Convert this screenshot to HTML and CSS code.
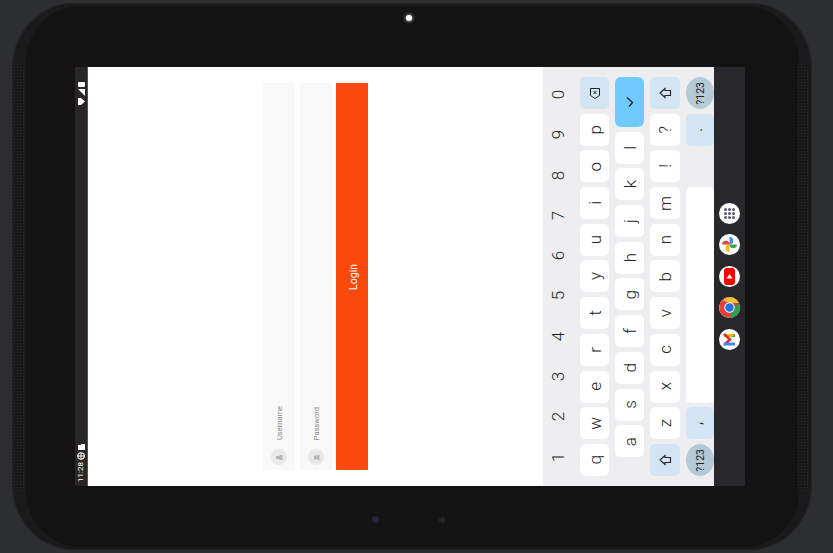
FILE: index.html
```html
<!DOCTYPE html>
<html lang="en">
<head>
<meta charset="utf-8">
<title>Login</title>
<link rel="stylesheet" href="styles.css">
</head>
<body>
<div class="device">
  <div class="face"></div>
  <div class="grille grille-left"></div>
  <div class="grille grille-right"></div>
  <div class="camera"></div>
  <div class="sensor sensor-a"></div>
  <div class="sensor sensor-b"></div>
  <main class="screen">
    <aside class="status">
      <div class="status-group">
        <svg class="st-icon" width="7" height="5" viewBox="0 0 7 5"><rect x="0" y="0" width="7" height="5" rx="1" fill="#fff"/></svg>
        <svg class="st-icon" width="7" height="7" viewBox="0 0 7 7"><path d="M0 0H7V7Z" fill="#fff"/></svg>
        <svg class="st-icon" width="7" height="7" viewBox="0 0 7 7"><path d="M0 0 3 0 7 3.5 3 7 0 7Z" fill="#fff"/></svg>
      </div>
      <div class="status-group">
        <svg class="st-icon" width="7" height="6" viewBox="0 0 7 6"><path d="M0 1H3V0H7V6H0Z" fill="#fff"/></svg>
        <svg class="st-icon" width="8" height="8" viewBox="0 0 8 8"><circle cx="4" cy="4" r="3.2" fill="none" stroke="#fff" stroke-width="1.1"/><path d="M0 4H8M4 1V7" stroke="#fff" stroke-width="1"/></svg>
        <span class="time">11:28</span>
      </div>
    </aside>

    <section class="app">
      <div class="field">
        <span class="field-label">Username</span>
        <span class="field-icon"><svg width="7" height="7" viewBox="0 0 7 7"><path d="M0 2H3.500V1H6.500V6H3.500V5H0Z" fill="#b5b5b5"/></svg></span>
      </div>
      <div class="field">
        <span class="field-label">Password</span>
        <span class="field-icon"><svg width="7" height="7" viewBox="0 0 7 7"><path d="M1 1.500H5V0.800H6.500V6.200H5V5.500H1Z" fill="#b5b5b5"/></svg></span>
      </div>
      <button class="login"><span class="rot login-text">Login</span></button>
    </section>

    <section class="keyboard">
      <div class="digits">
        <span class="rot">0</span><span class="rot">9</span><span class="rot">8</span><span class="rot">7</span><span class="rot">6</span><span class="rot">5</span><span class="rot">4</span><span class="rot">3</span><span class="rot">2</span><span class="rot">1</span>
      </div>
      <div class="kcol">
        <div class="key action"><svg width="12" height="13" viewBox="0 0 12 13"><path d="M1.500 1.500H10.500V8.500L6 11.500 1.500 8.500Z" fill="none" stroke="#222" stroke-width="1"/><path d="M4.500 4 7.500 7M7.500 4 4.500 7" stroke="#222" stroke-width="1"/></svg></div>
        <div class="key"><span class="rot">p</span></div>
        <div class="key"><span class="rot">o</span></div>
        <div class="key"><span class="rot">i</span></div>
        <div class="key"><span class="rot">u</span></div>
        <div class="key"><span class="rot">y</span></div>
        <div class="key"><span class="rot">t</span></div>
        <div class="key"><span class="rot">r</span></div>
        <div class="key"><span class="rot">e</span></div>
        <div class="key"><span class="rot">w</span></div>
        <div class="key"><span class="rot">q</span></div>
      </div>
      <div class="kcol">
        <div class="key enter"><svg width="10" height="12" viewBox="0 0 10 12"><path d="M2 1.500 7.500 6.500 4 10.500" fill="none" stroke="#222" stroke-width="1.300"/></svg></div>
        <div class="key"><span class="rot">l</span></div>
        <div class="key"><span class="rot">k</span></div>
        <div class="key"><span class="rot">j</span></div>
        <div class="key"><span class="rot">h</span></div>
        <div class="key"><span class="rot">g</span></div>
        <div class="key"><span class="rot">f</span></div>
        <div class="key"><span class="rot">d</span></div>
        <div class="key"><span class="rot">s</span></div>
        <div class="key"><span class="rot">a</span></div>
      </div>
      <div class="kcol">
        <div class="key action"><svg width="13" height="12" viewBox="0 0 13 12"><path d="M1 6 6 1.500V3.500H11.500V8.500H6V10.500Z" fill="none" stroke="#222" stroke-width="1.100"/></svg></div>
        <div class="key"><span class="rot">?</span></div>
        <div class="key"><span class="rot">!</span></div>
        <div class="key"><span class="rot">m</span></div>
        <div class="key"><span class="rot">n</span></div>
        <div class="key"><span class="rot">b</span></div>
        <div class="key"><span class="rot">v</span></div>
        <div class="key"><span class="rot">c</span></div>
        <div class="key"><span class="rot">x</span></div>
        <div class="key"><span class="rot">z</span></div>
        <div class="key action"><svg width="13" height="12" viewBox="0 0 13 12"><path d="M1 6 6 1.500V3.500H11.500V8.500H6V10.500Z" fill="none" stroke="#222" stroke-width="1.100"/></svg></div>
      </div>
      <div class="kcol kcol-edge">
        <div class="key round"><span class="rot small">?123</span></div>
        <div class="key action"><span class="rot punct">.</span></div>
        <div class="key ghost"></div>
        <div class="key space"></div>
        <div class="key action"><span class="rot punct">,</span></div>
        <div class="key round"><span class="rot small">?123</span></div>
      </div>
    </section>

    <nav class="dock">
      <span class="app-icon"><svg width="13" height="13" viewBox="0 0 13 13"><g fill="#5c5a78"><circle cx="2.500" cy="2.500" r="1.500"/><circle cx="6.500" cy="2.500" r="1.500"/><circle cx="10.500" cy="2.500" r="1.500"/><circle cx="2.500" cy="6.500" r="1.500"/><circle cx="6.500" cy="6.500" r="1.500"/><circle cx="10.500" cy="6.500" r="1.500"/><circle cx="2.500" cy="10.500" r="1.500"/><circle cx="6.500" cy="10.500" r="1.500"/><circle cx="10.500" cy="10.500" r="1.500"/></g></svg></span>
      <span class="app-icon"><svg width="17" height="17" viewBox="0 0 16 16"><path d="M8 8V1A3.500 3.500 0 0 1 8 8Z" fill="#4285f4"/><path d="M8 8H15A3.500 3.500 0 0 1 8 8Z" fill="#34a853"/><path d="M8 8V15A3.500 3.500 0 0 1 8 8Z" fill="#fbbc04"/><path d="M8 8H1A3.500 3.500 0 0 1 8 8Z" fill="#ea4335"/></svg></span>
      <span class="app-icon"><svg width="21" height="21" viewBox="0 0 21 21"><rect x="5" y="2" width="11" height="17" rx="3" fill="#f00"/><path d="M10.500 8 13.500 12.500H7.500Z" fill="#fff"/></svg></span>
      <span class="app-icon"><svg width="21" height="21" viewBox="0 0 21 21"><circle cx="10.500" cy="10.500" r="10.500" fill="#db4437"/><path d="M10.500 0A10.500 10.500 0 0 1 20 6H10.500L4 3.500A10.500 10.500 0 0 1 10.500 0Z" fill="#fbc02d"/><path d="M20 6A10.500 10.500 0 0 1 10 21L15 11Z" fill="#2e9e4f"/><circle cx="10.500" cy="10.500" r="5.200" fill="#fff"/><circle cx="10.500" cy="10.500" r="4.200" fill="#1a73e8"/></svg></span>
      <span class="app-icon"><svg width="15" height="15" viewBox="0 0 15 15"><path d="M2 2H13V5H2Z" fill="#fbbc04"/><path d="M2 2 8 7.500 2 13" fill="none" stroke="#d93025" stroke-width="2.600"/><path d="M9 5H13V2L7 7.500Z" fill="#34a853"/><path d="M2 10.500H13V13.500H2Z" fill="#4285f4"/></svg></span>
    </nav>
  </main>
</div>
</body>
</html>
```
FILE: styles.css
```css
* { box-sizing: border-box; }
html, body { margin: 0; padding: 0; height: 100%; overflow: hidden; }
body { background: #2c2e30; font-family: Roboto, "Liberation Sans", sans-serif; }

.device {
  position: relative;
  width: 800px;
  height: 547px;
  margin: 3px 0 0 12px;
  padding: 64px 0 0 63px;
  background: #1a1a1b;
  border-radius: 62px / 66px;
  box-shadow: inset 0 0 0 1px #222325;
}
.face {
  position: absolute;
  left: 14px; right: 13px; top: 3px; bottom: 3px;
  background: #131313;
  border-radius: 54px / 56px;
}
.grille {
  position: absolute;
  top: 60px;
  bottom: 58px;
  width: 11px;
  border-radius: 5px;
  background-color: #181819;
  background-image: radial-gradient(#303032 0.7px, transparent 1px);
  background-size: 3px 3px;
}
.grille-left { left: 1px; }
.grille-right { right: 4px; }
.camera {
  position: absolute;
  left: 394px; top: 12px;
  width: 6px; height: 6px;
  border-radius: 50%;
  background: #fff;
  box-shadow: 0 0 3px 1px #777;
}
.sensor {
  position: absolute;
  top: 513px;
  border-radius: 50%;
  background: #23283a;
}
.sensor-a { left: 360px; width: 7px; height: 7px; }
.sensor-b { left: 427px; top: 514px; width: 6px; height: 6px; background: #25272c; }

.screen {
  position: relative;
  display: flex;
  width: 670px;
  height: 419px;
}

.rot {
  writing-mode: vertical-rl;
  transform: rotate(180deg);
}

/* status bar */
.status {
  width: 13px;
  flex: none;
  background: #2a2623;
  border-right: 1px solid #55524f;
  display: flex;
  flex-direction: column;
  justify-content: space-between;
  align-items: center;
  padding: 15px 0 4px 0;
}
.status-group { display: flex; flex-direction: column; align-items: center; gap: 2px; }
.st-icon { display: block; flex: none; }
.time {
  writing-mode: vertical-rl;
  transform: rotate(180deg);
  color: #fff;
  font-size: 8px;
  line-height: 8px;
}

/* app */
.app {
  width: 455px;
  flex: none;
  background: #fff;
  display: flex;
  gap: 5px;
  padding: 16px 0 0 175px;
  align-items: flex-start;
}
.field {
  width: 32px;
  height: 387px;
  background: #f8f8f8;
  display: flex;
  flex-direction: column;
  justify-content: flex-end;
  align-items: center;
  padding-bottom: 5px;
  gap: 9px;
}
.field-label {
  writing-mode: vertical-rl;
  transform: rotate(180deg);
  font-size: 7.500px;
  line-height: 9px;
  color: #8b8784;
}
.field-icon {
  width: 16px; height: 16px;
  border-radius: 50%;
  background: #e9e9e9;
  display: flex;
  align-items: center;
  justify-content: center;
}
.login {
  width: 32px;
  height: 387px;
  margin-left: -1px;
  border: 0;
  padding: 0 0 0 2px;
  background: #f9490c;
  color: #fff;
  font-family: inherit;
  font-size: 10.500px;
  display: flex;
  align-items: center;
  justify-content: center;
}

/* keyboard */
.keyboard {
  width: 171px;
  flex: none;
  background: #eeeef0;
  display: grid;
  grid-template-columns: 31px 29px 29px 30px 28px;
  column-gap: 6px;
  color: #222;
  font-size: 17px;
  font-weight: 300;
}
.digits {
  display: flex;
  flex-direction: column;
  padding-top: 7px;
  padding-right: 1px;
}
.digits span {
  height: 40.300px;
  display: flex;
  align-items: center;
  justify-content: center;
  width: 100%;
}
.kcol {
  display: flex;
  flex-direction: column;
  gap: 4.700px;
  padding-top: 10px;
}
.key {
  height: 32px;
  flex: none;
  background: #fff;
  border-radius: 5px;
  display: flex;
  align-items: center;
  justify-content: center;
}
.key.action { background: #d3e4f3; }
.key.enter { height: 50px; background: #6fcbff; border-radius: 6px; }
.key.round { background: #b4cad6; border-radius: 50%; }
.key.space { height: 215.500px; }
.key.ghost { background: transparent; }
.small { font-size: 10.500px; font-weight: 400; }
.punct { font-size: 14px; font-weight: 400; margin-right: 6px; }

/* dock */
.dock {
  width: 31px;
  flex: none;
  background: #27272c;
  display: flex;
  flex-direction: column;
  align-items: center;
  padding-top: 136px;
  gap: 10.400px;
}
.app-icon {
  width: 21px; height: 21px;
  flex: none;
  border-radius: 50%;
  background: #fff;
  display: flex;
  align-items: center;
  justify-content: center;
  overflow: hidden;
}
```
